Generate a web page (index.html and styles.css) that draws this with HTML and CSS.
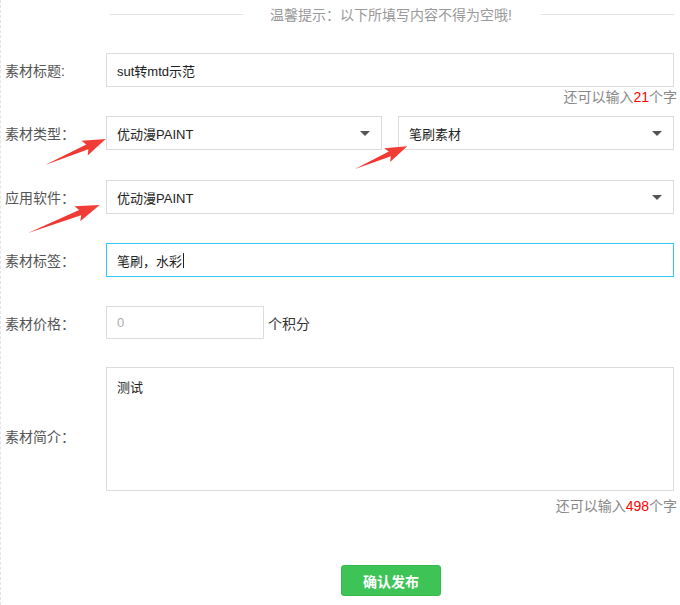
FILE: index.html
```html
<!DOCTYPE html>
<html lang="zh-CN">
<head>
<meta charset="utf-8">
<title>素材发布</title>
<link rel="stylesheet" href="styles.css">
</head>
<body>
<div class="page">
  <div class="row tip-row">
    <div class="label"></div>
    <div class="ctl tip">
      <span class="tip-line"></span>
      <span class="tip-text">温馨提示：以下所填写内容不得为空哦!</span>
      <span class="tip-line"></span>
    </div>
  </div>

  <div class="row r1">
    <div class="label">素材标题:</div>
    <div class="ctl"><div class="box">sut转mtd示范</div></div>
  </div>
  <div class="hint">还可以输入<em>21</em>个字</div>

  <div class="row r2">
    <div class="label">素材类型：</div>
    <div class="ctl split">
      <div class="box select"><span>优动漫PAINT</span><i class="caret"></i></div>
      <div class="box select"><span>笔刷素材</span><i class="caret"></i></div>
    </div>
  </div>

  <div class="row r3">
    <div class="label">应用软件：</div>
    <div class="ctl"><div class="box select"><span>优动漫PAINT</span><i class="caret"></i></div></div>
  </div>

  <div class="row r4">
    <div class="label">素材标签：</div>
    <div class="ctl"><div class="box focus">笔刷，水彩<span class="cursor"></span></div></div>
  </div>

  <div class="row r5">
    <div class="label">素材价格：</div>
    <div class="ctl price-ctl">
      <div class="box price"><span class="ph">0</span></div>
      <span class="unit">个积分</span>
    </div>
  </div>

  <div class="row r6">
    <div class="label label-intro">素材简介：</div>
    <div class="ctl"><div class="box area">测试</div></div>
  </div>
  <div class="hint hint2">还可以输入<em>498</em>个字</div>

  <div class="row r7">
    <div class="label"></div>
    <div class="ctl btn-wrap"><button class="btn">确认发布</button></div>
  </div>

  <svg class="arrows" width="680" height="605" viewBox="0 0 680 605" aria-hidden="true">
    <defs>
      <linearGradient id="ag" x1="0" y1="0" x2="1" y2="0">
        <stop offset="0" stop-color="#f0302a"/>
        <stop offset="1" stop-color="#f2403a"/>
      </linearGradient>
    </defs>
    <g transform="translate(45 165) rotate(-23.1)">
      <path d="M0 0 L46 -2.6 L43 -8 L66 0 L43 8 L46 2.6 Z" fill="url(#ag)"/>
    </g>
    <g transform="translate(355 169) rotate(-23.5)">
      <path d="M0 0 L38 -2.6 L35 -7.5 L57 0 L35 7.5 L38 2.6 Z" fill="url(#ag)"/>
    </g>
    <g transform="translate(28 233) rotate(-21.3)">
      <path d="M0 0 L56 -2.8 L53 -8 L77 0 L53 8 L56 2.8 Z" fill="url(#ag)"/>
    </g>
  </svg>
</div>
</body>
</html>
```

FILE: styles.css
```css
html, body {
  margin: 0;
  padding: 0;
  background: #fff;
}

body {
  font-family: "Liberation Sans", "Noto Sans CJK SC", sans-serif;
  font-size: 13px;
  color: #333;
}

.page {
  position: relative;
  width: 680px;
  height: 605px;
  box-sizing: border-box;
  padding-left: 4px;
  border-left: 1px dashed #e4e4e4;
  overflow: hidden;
}

.row {
  display: flex;
  align-items: center;
}

.label {
  width: 101px;
  flex: none;
  color: #555;
  font-size: 14px;
  white-space: nowrap;
}

.ctl {
  width: 568px;
  flex: none;
}

/* tip header */
.tip-row {
  padding-top: 4px;
  height: 20px;
}

.tip {
  display: flex;
  align-items: center;
  padding-left: 4px;
  box-sizing: border-box;
}

.tip-line {
  flex: 1;
  height: 1px;
  background: #e2e2e2;
}

.tip-text {
  color: #999;
  font-size: 14px;
  padding: 0 29px 0 27px;
  white-space: nowrap;
}

/* boxes */
.box {
  box-sizing: border-box;
  height: 34px;
  border: 1px solid #dcdcdc;
  background: #fff;
  padding: 0 10px;
  display: flex;
  align-items: center;
  color: #222;
  font-size: 13px;
}

.select {
  justify-content: space-between;
  padding-right: 11px;
}

.caret {
  width: 0;
  height: 0;
  border-top: 5px solid #555;
  border-left: 5px solid transparent;
  border-right: 5px solid transparent;
}

.split {
  display: flex;
  gap: 16px;
}

.split .box {
  flex: 1;
}

.focus {
  border-color: #2ec7f7;
}

.cursor {
  display: inline-block;
  width: 1px;
  height: 15px;
  background: #222;
  margin-left: 1px;
}

.price-ctl {
  display: flex;
  align-items: center;
}

.price {
  width: 158px;
  height: 33px;
}

.ph {
  color: #aaa;
}

.unit {
  margin-left: 4px;
  color: #333;
  font-size: 14px;
}

.area {
  height: 124px;
  align-items: flex-start;
  padding-top: 9px;
}

.label-intro {
  padding-top: 14px;
}

/* hints */
.hint {
  width: 672px;
  text-align: right;
  color: #888;
  font-size: 14px;
  line-height: 17px;
  margin-top: 2px;
}

.hint em {
  font-style: normal;
  color: #f00;
  font-size: 14px;
}

.r1 { margin-top: 29px; }
.r2 { margin-top: 10px; }
.r3 { margin-top: 30px; }
.r4 { margin-top: 29px; }
.r5 { margin-top: 29px; }
.r6 { margin-top: 28px; }
.hint2 { margin-top: 7px; }
.r7 { margin-top: 50px; }

.btn-wrap {
  display: flex;
  justify-content: center;
  padding-left: 2px;
  box-sizing: border-box;
}

.btn {
  width: 100px;
  height: 31px;
  border: 1px solid #37b84d;
  border-radius: 3px;
  background: #3ec356;
  color: #fff;
  font-family: "Liberation Sans", "Noto Sans CJK SC", sans-serif;
  font-size: 14px;
  font-weight: bold;
  padding: 0;
}

.arrows {
  position: absolute;
  left: -1px;
  top: 0;
  pointer-events: none;
}
```
